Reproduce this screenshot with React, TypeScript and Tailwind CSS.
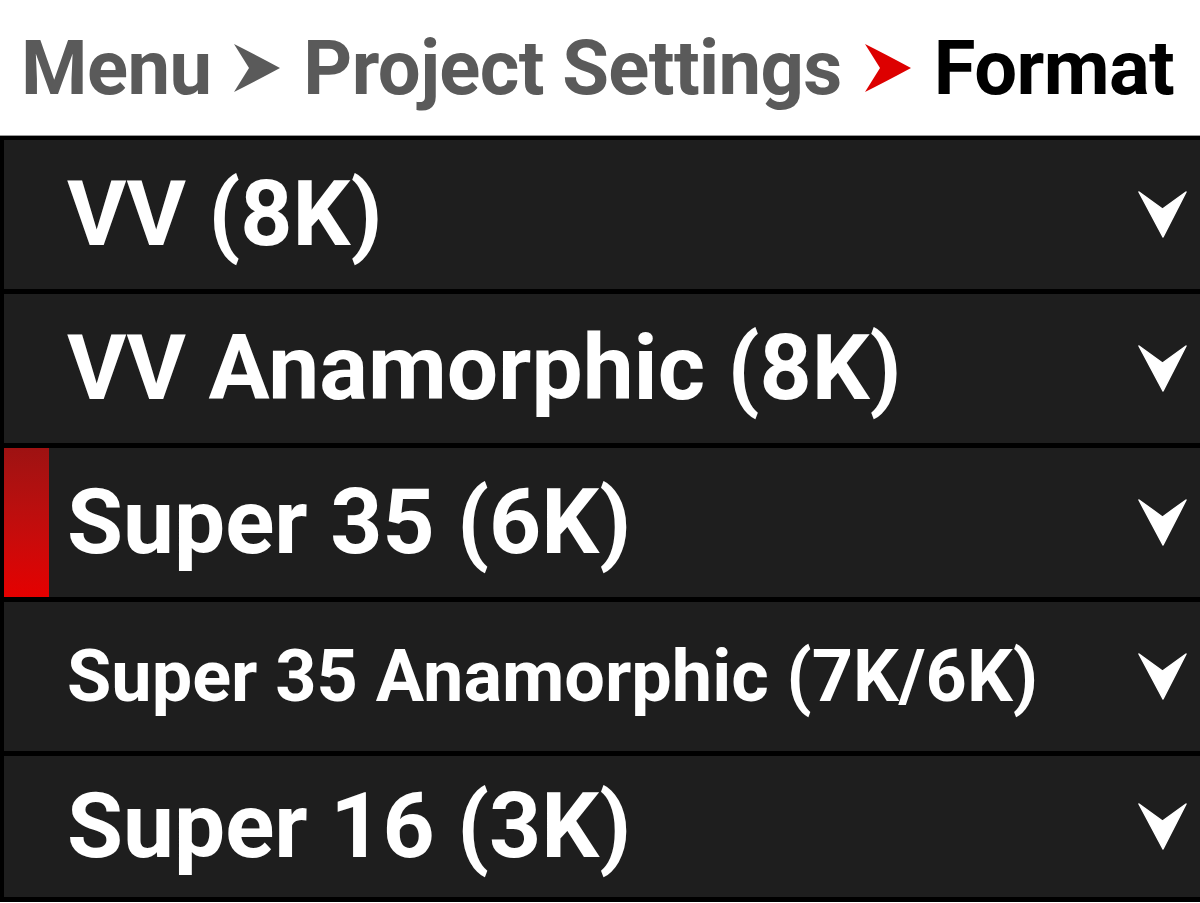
import type { ReactNode } from 'react'

const formats = [
  { label: 'VV (8K)', size: 'text-[91px]' },
  { label: 'VV Anamorphic (8K)', size: 'text-[91px]' },
  { label: 'Super 35 (6K)', size: 'text-[91px]', selected: true },
  { label: 'Super 35 Anamorphic (7K/6K)', size: 'text-[72px]' },
  { label: 'Super 16 (3K)', size: 'text-[91px]', last: true },
]

function Crumb({ color }: { color: string }) {
  return (
    <svg width="46" height="48" viewBox="0 0 46 48" className="mx-[23px] shrink-0">
      <path d="M0 0 Q20 10 46 24 Q20 38 0 48 L15 24 Z" fill={color} />
    </svg>
  )
}

function Chevron() {
  return (
    <svg width="49" height="47" viewBox="0 0 49 47" className="shrink-0">
      <path d="M1 1 L24.5 18 L48 1 L25 46 Z" fill="#ffffff" stroke="#ffffff" strokeWidth="1.5" strokeLinejoin="round" />
    </svg>
  )
}

function Row({ children, selected, last }: { children: ReactNode; selected?: boolean; last?: boolean }) {
  return (
    <div className={`relative flex items-center bg-[#1e1e1e] pl-[63px] pr-[13px] ${last ? 'h-[141px]' : 'h-[149px]'}`}>
      {selected && (
        <div className="absolute left-0 top-0 h-full w-[45px] bg-gradient-to-b from-[#9e1212] to-[#e50000]" />
      )}
      {children}
    </div>
  )
}

export default function App() {
  return (
    <div className="h-[903px] w-[1200px] overflow-hidden bg-white font-['Roboto',sans-serif] font-bold">
      <div className="flex h-[135px] items-center pl-[21px] text-[76px] leading-none tracking-[-0.6px] text-[#5a5a5a]">
        <span>Menu</span>
        <Crumb color="#5a5a5a" />
        <span>Project Settings</span>
        <Crumb color="#dd0000" />
        <span className="text-black">Format</span>
      </div>
      <div className="h-px bg-[#9a9a9a]" />
      <div className="flex flex-col gap-[5px] bg-black pb-[5px] pl-[4px] pt-[4px]">
        {formats.map((f) => (
          <Row key={f.label} selected={f.selected} last={f.last}>
            <span className={`flex-1 leading-none text-white ${f.size}`}>{f.label}</span>
            <Chevron />
          </Row>
        ))}
      </div>
    </div>
  )
}
